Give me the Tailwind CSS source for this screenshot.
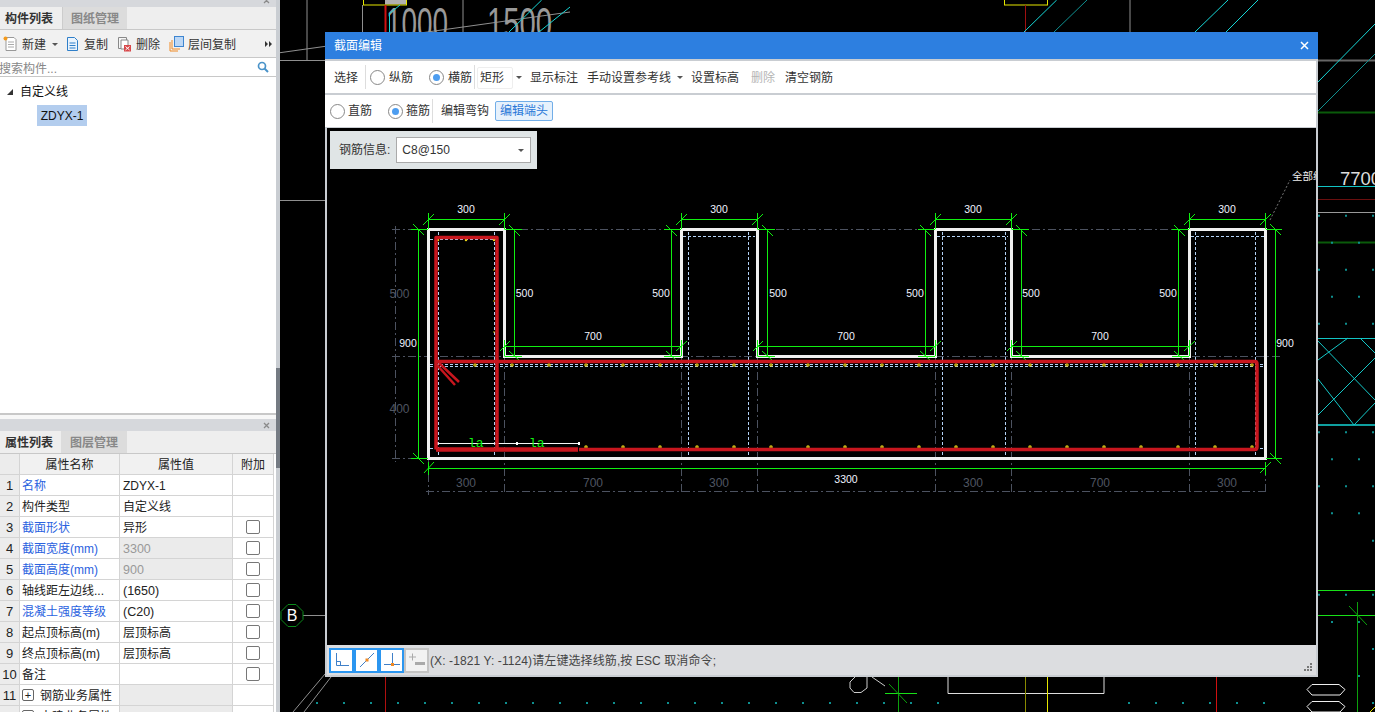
<!DOCTYPE html>
<html lang="zh">
<head>
<meta charset="UTF-8">
<title>截面编辑</title>
<script src="https://cdn.jsdelivr.net/npm/@tailwindcss/browser@4"></script>
</head>
<body class="bg-black overflow-hidden font-['Liberation_Sans','Noto_Sans_CJK_SC',sans-serif] text-[12px] text-[#222]">
<div class="relative w-[1375px] h-[712px] flex overflow-hidden">

  <!-- left side panels -->
  <div class="w-[280px] h-full flex flex-col shrink-0 bg-[#f0f0f0] border-r-[4px] border-[#c9cdd2] relative z-10">
    <div class="h-[7px] bg-[#d6d8dc] flex justify-end pr-[6px] overflow-hidden">
      <svg width="7" height="7" viewBox="0 0 7 7" class="-mt-[3px]"><path d="M1 1l5 5M6 1l-5 5" stroke="#8a8a8a" stroke-width="1.300"/></svg>
    </div>
    <div class="h-[23px] flex bg-[#eeeeee] border-b border-[#c8c8c8]">
      <div class="w-[62px] flex items-center pl-[5px] pt-[2px] font-bold text-[#333]">构件列表</div>
      <div class="w-[65px] flex items-center pl-[8px] pt-[2px] bg-[#dcdcdc] text-[#888] font-bold border-l border-[#ccc]">图纸管理</div>
    </div>
    <div class="h-[28px] flex items-center bg-[#f1f1f1] border-b border-[#c8c8c8] text-[#333] pt-[2px]">
      <svg class="ml-[3px] mr-[4px] -mt-[2px]" width="15" height="16" viewBox="0 0 15 16"><path d="M3 1.500h8l2 2v11H3z" fill="#fff" stroke="#999"/><path d="M5 6h6M5 8.500h6M5 11h6" stroke="#aaa"/><circle cx="2.500" cy="2.500" r="2" fill="#f39a1e"/></svg>
      <span>新建</span>
      <span class="ml-[6px] w-0 h-0 border-x-[3px] border-x-transparent border-t-[3px] border-t-[#555]"></span>
      <svg class="ml-[8px] mr-[5px] -mt-[2px]" width="13" height="16" viewBox="0 0 13 16"><path d="M1.500 1.500h7l3 3v10h-10z" fill="#eaf3fc" stroke="#2f7fc9"/><path d="M3.500 7h6M3.500 9.500h6M3.500 12h6" stroke="#2f7fc9"/></svg>
      <span>复制</span>
      <svg class="ml-[9px] mr-[4px] -mt-[2px]" width="15" height="16" viewBox="0 0 15 16"><path d="M1.500 1.500h8v11h-8z" fill="#f5f5f5" stroke="#888"/><path d="M4 4h7v9H4z" fill="#fff" stroke="#888"/><rect x="7" y="9" width="7" height="6.500" fill="#d8484a"/><path d="M8.500 10.500l4 3.500m0-3.500l-4 3.500" stroke="#fff"/></svg>
      <span>删除</span>
      <svg class="ml-[9px] mr-[4px] -mt-[2px]" width="15" height="16" viewBox="0 0 15 16"><path d="M1 6v9h8M3 4v9h8" fill="none" stroke="#f08a24"/><rect x="5.500" y="0.500" width="9" height="10" fill="#bcd7f5" stroke="#3d85d0"/></svg>
      <span>层间复制</span>
      <svg class="ml-auto mr-[4px] -mt-[2px]" width="7" height="6" viewBox="0 0 7 6" fill="#333"><path d="M0 0l3 3l-3 3zM4 0l3 3l-3 3z"/></svg>
    </div>
    <div class="h-[19px] flex items-center bg-white border-b border-[#c8c8c8] text-[#888] pt-[3px]">
      <span class="-ml-[1px]">搜索构件...</span>
      <svg class="ml-auto mr-[7px] -mt-[3px]" width="12" height="12" viewBox="0 0 12 12"><circle cx="5" cy="5" r="3.500" fill="none" stroke="#4a93c9" stroke-width="1.700"/><path d="M7.500 7.500l3.500 3.500" stroke="#4a93c9" stroke-width="2"/></svg>
    </div>
    <div class="h-[338px] bg-white relative pt-[4px] border-b-2 border-[#c8c8c8]">
      <div class="h-[21px] flex items-center pl-[7px] text-[#111]">
        <svg width="6" height="6" viewBox="0 0 6 6" class="mr-[7px]"><path d="M0 6L6 0v6z" fill="#333"/></svg>
        <span>自定义线</span>
      </div>
      <div class="ml-[37px] mt-[3px] w-[50px] h-[21px] bg-[#b3cdee] flex items-center justify-center text-[#111]">ZDYX-1</div>
    </div>
    <div class="h-[4px] bg-[#f7f7f7]"></div>
    <div class="h-[12px] bg-[#d6d8dc] flex items-center justify-end pr-[6px]">
      <svg width="7" height="7" viewBox="0 0 7 7"><path d="M1 1l5 5M6 1l-5 5" stroke="#8a8a8a" stroke-width="1.300"/></svg>
    </div>
    <div class="h-[22px] flex bg-[#eeeeee]">
      <div class="w-[61px] flex items-center pl-[5px] pt-[2px] font-bold text-[#333]">属性列表</div>
      <div class="w-[66px] flex items-center pl-[9px] pt-[2px] bg-[#dcdcdc] text-[#888] font-bold">图层管理</div>
    </div>
    <div class="flex-1 bg-white overflow-hidden border-t border-[#c8c8c8]">
      <div class="grid grid-cols-[20px_100px_113px_41px] auto-rows-[21px] w-[274px] text-[#222] [&>div]:border-b [&>div]:border-r [&>div]:border-[#d4d4d4] [&>div]:flex [&>div]:items-center [&>div]:pt-[2px] [&>div]:min-w-0 [&>div]:whitespace-nowrap">
        <div class="bg-[#ececec]"></div><div class="bg-[#f1f1f1] justify-center">属性名称</div><div class="bg-[#f1f1f1] justify-center">属性值</div><div class="bg-[#f1f1f1] justify-center">附加</div>

        <div class="bg-[#ececec] justify-center text-[13px]">1</div><div class="pl-[2px] text-[#2a62e0]">名称</div><div class="pl-[3px]">ZDYX-1</div><div></div>
        <div class="bg-[#ececec] justify-center text-[13px]">2</div><div class="pl-[2px]">构件类型</div><div class="pl-[3px]">自定义线</div><div></div>
        <div class="bg-[#ececec] justify-center text-[13px]">3</div><div class="pl-[2px] text-[#2a62e0]">截面形状</div><div class="pl-[3px]">异形</div><div class="justify-center"><span class="w-[14px] h-[14px] mb-[2px] border border-[#777] rounded-[2px] bg-white"></span></div>
        <div class="bg-[#ececec] justify-center text-[13px]">4</div><div class="pl-[2px] text-[#2a62e0]">截面宽度(mm)</div><div class="pl-[3px] bg-[#ebebeb] text-[#999] text-[12.5px]">3300</div><div class="justify-center"><span class="w-[14px] h-[14px] mb-[2px] border border-[#777] rounded-[2px] bg-white"></span></div>
        <div class="bg-[#ececec] justify-center text-[13px]">5</div><div class="pl-[2px] text-[#2a62e0]">截面高度(mm)</div><div class="pl-[3px] bg-[#ebebeb] text-[#999] text-[12.5px]">900</div><div class="justify-center"><span class="w-[14px] h-[14px] mb-[2px] border border-[#777] rounded-[2px] bg-white"></span></div>
        <div class="bg-[#ececec] justify-center text-[13px]">6</div><div class="pl-[2px]">轴线距左边线...</div><div class="pl-[3px] text-[12.5px]">(1650)</div><div class="justify-center"><span class="w-[14px] h-[14px] mb-[2px] border border-[#777] rounded-[2px] bg-white"></span></div>
        <div class="bg-[#ececec] justify-center text-[13px]">7</div><div class="pl-[2px] text-[#2a62e0]">混凝土强度等级</div><div class="pl-[3px] text-[12.5px]">(C20)</div><div class="justify-center"><span class="w-[14px] h-[14px] mb-[2px] border border-[#777] rounded-[2px] bg-white"></span></div>
        <div class="bg-[#ececec] justify-center text-[13px]">8</div><div class="pl-[2px]">起点顶标高(m)</div><div class="pl-[3px]">层顶标高</div><div class="justify-center"><span class="w-[14px] h-[14px] mb-[2px] border border-[#777] rounded-[2px] bg-white"></span></div>
        <div class="bg-[#ececec] justify-center text-[13px]">9</div><div class="pl-[2px]">终点顶标高(m)</div><div class="pl-[3px]">层顶标高</div><div class="justify-center"><span class="w-[14px] h-[14px] mb-[2px] border border-[#777] rounded-[2px] bg-white"></span></div>
        <div class="bg-[#ececec] justify-center text-[13px]">10</div><div class="pl-[2px]">备注</div><div></div><div class="justify-center"><span class="w-[14px] h-[14px] mb-[2px] border border-[#777] rounded-[2px] bg-white"></span></div>
        <div class="bg-[#ececec] justify-center text-[13px]">11</div><div class="pl-[2px]"><span class="w-[12px] h-[12px] mb-[2px] border border-[#666] rounded-[2px] mr-[6px] flex items-center justify-center text-[11px] leading-none">+</span>钢筋业务属性</div><div class="bg-[#ebebeb]"></div><div></div>
        <div class="bg-[#ececec] justify-center text-[13px]">12</div><div class="pl-[2px]"><span class="w-[12px] h-[12px] mb-[2px] border border-[#666] rounded-[2px] mr-[6px] flex items-center justify-center text-[11px] leading-none">+</span>土建业务属性</div><div class="bg-[#ebebeb]"></div><div></div>
      </div>
    </div>
    <span class="absolute left-[276px] top-[368px] w-[4px] h-[100px] bg-[#757b83]"></span>
  </div>

  <!-- CAD background drawing, free canvas -->
  <svg class="absolute left-0 top-0" width="1375" height="712" viewBox="0 0 1375 712" fill="none">
    <g stroke="#8f8f8f">
      <path d="M307 0v60.500M280 60.500h46M280 52.700L570 12M463 0v32M362.500 5v27M280 200.500h46M303 615.500h23"/>
      <path d="M325 674l-32 38M331 677l-27 35"/>
      <path d="M1130 0v32"/>
      <path d="M1318 60.500h57" stroke="#666" stroke-width="2"/>
    </g>
    <text x="386" y="39" font-size="44" fill="#999" font-family="Liberation Sans" textLength="62" lengthAdjust="spacingAndGlyphs">1000</text>
    <text x="487" y="39" font-size="44" fill="#999" font-family="Liberation Sans" textLength="65" lengthAdjust="spacingAndGlyphs">1500</text>
    <rect x="385" y="-4" width="21" height="8.500" fill="#b0b0b0"/>
    <rect x="363.500" y="-4" width="43" height="9" stroke="#e6e600"/>
    <rect x="1004.500" y="-4" width="43" height="9" stroke="#e6e600"/>
    <path d="M385.500 5v27" stroke="#d01010" stroke-width="2"/>
    <path d="M1025.500 5v27" stroke="#a01010"/>
    <g stroke="#16d6d6">
      <path d="M400 5L389 14M389.500 14v18M541.700 0L509 32M570 7L539 32M1056.700 0L1024 32M1228 0l-33 32M1258 0l-32 32M1375 24L1318 82"/>
      <path d="M1087 0l-33 32M1375 54L1318 111" stroke="#0f8f8f"/>
    </g>
    <path d="M288 604.500h8l7 7v8l-7 7h-8l-7-7v-8z" stroke="#0a8a1a"/>
    <text x="292" y="621" text-anchor="middle" font-size="16" fill="#fff" font-family="Liberation Sans">B</text>
    <!-- right strip -->
    <text x="1340" y="185" font-size="18.500" fill="#ddd" font-family="Liberation Sans">7700</text>
    <path d="M1318 112.500h57" stroke="#0a5a0a" stroke-width="2"/>
    <path d="M1318 186.500h57" stroke="#12c4c4"/>
    <path d="M1318 199.500h57" stroke="#6a0f0f"/>
    <path d="M1318 212.500h57" stroke="#999"/>
    <path d="M1318 242.500h57" stroke="#0a5a0a" stroke-width="2"/>
    <path d="M1318 338.500h57" stroke="#12c4c4"/>
    <path d="M1318 425h57" stroke="#0f9f9f" stroke-width="2"/>
    <path d="M1318 360L1348 338M1318 341L1375 400M1360 338L1375 353M1318 415L1375 358M1318 379L1354 425L1375 403" stroke="#14c8c8"/>
    <path d="M1318 590.500h57M1318 615.500h57" stroke="#18e018"/>
    <path d="M1357.500 602v110" stroke="#0ca00c"/>
    <path d="M1349 606l18 19" stroke="#0ca00c"/>
    <path d="M1216.500 677v35" stroke="#d01010"/>
    <path d="M385.500 677v35" stroke="#b01010"/>
    <path d="M1312 684.500h27l6 5l-5 5.500h-28l-5-5.500zM1312 701.500h27l6 5l-5 5.500h-28l-5-5.500z" stroke="#eee"/>
    <path d="M1370 712l5-5" stroke="#e6e600"/>
    <path d="M855 677L850 682V688L854 692.500H861L867 688V677M872 677L885 686" stroke="#ccc"/>
    <path d="M948 677V693.500H1104V677" stroke="#ddd"/>
    <path d="M1025.500 677v35" stroke="#8a8a00"/>
    <path d="M1047.500 677v35" stroke="#e6e600"/>
    <path d="M898.500 677v35" stroke="#0ca00c"/>
    <path d="M885 693.500h32" stroke="#18e018"/>
    <path d="M889 684l18 19" stroke="#0ca00c"/>
    <g stroke="#0e8f8f" stroke-width="2" stroke-dasharray="2 25">
      <path d="M316 703H942M1128 703H1267"/>
      <path d="M1318 215.700h57M1318 269.700h57M1318 323.700h57M1318 432.300h57M1318 486.300h57M1318 594.700h57"/>
      <path d="M1331 242.700h30M1331 296.700h30M1331 459.300h30M1331 513.300h30M1331 622h30"/>
      <path d="M1372 540.700h3M1372 649h3M1372 703h3M1358 676h3"/>
    </g>
  </svg>

  <!-- section editor dialog -->
  <div class="absolute left-[325px] top-[32px] w-[993px] h-[645px] flex flex-col bg-[#c9cdd2] z-20">
    <div class="h-[27px] shrink-0 bg-[#2d7fe0] flex items-center justify-between pl-[9px] pr-[9px] text-white">
      <span>截面编辑</span>
      <svg width="9" height="9" viewBox="0 0 9 9"><path d="M1 1l7 7M8 1l-7 7" stroke="#fff" stroke-width="1.500"/></svg>
    </div>
    <div class="h-[32px] shrink-0 mt-[2px] bg-white flex items-center pl-[3px] pt-[2px] mr-[2px] text-[#333] whitespace-nowrap">
      <span class="px-[6px] h-[22px] flex items-center">选择</span>
      <span class="w-px h-[24px] -mt-[2px] bg-[#ddd] ml-[1px] mr-[4px]"></span>
      <span class="w-[15px] h-[15px] -mt-[2px] rounded-full border border-[#888] mr-[4px]"></span>纵筋
      <span class="w-[15px] h-[15px] -mt-[2px] rounded-full border border-[#888] ml-[16px] mr-[4px] flex items-center justify-center"><span class="w-[7px] h-[7px] rounded-full bg-[#4d9df0]"></span></span>横筋
      <span class="w-px h-[24px] -mt-[2px] bg-[#ddd] mx-[2px]"></span>
      <span class="w-[36px] h-[22px] border border-[#eee] rounded-[2px] flex items-center pl-[2px]">矩形</span>
      <span class="ml-[3px] -mt-[2px] w-0 h-0 border-x-[3px] border-x-transparent border-t-[3px] border-t-[#555]"></span>
      <span class="ml-[3px] px-[5px] h-[22px] flex items-center">显示标注</span>
      <span class="ml-[1px] px-[3px] h-[22px] flex items-center">手动设置参考线</span>
      <span class="ml-[3px] -mt-[2px] w-0 h-0 border-x-[3px] border-x-transparent border-t-[3px] border-t-[#555]"></span>
      <span class="ml-[3px] px-[5px] h-[22px] flex items-center">设置标高</span>
      <span class="ml-[2px] px-[5px] h-[22px] flex items-center text-[#b5b5b5]">删除</span>
      <span class="px-[5px] h-[22px] flex items-center">清空钢筋</span>
    </div>
    <div class="h-[32px] shrink-0 mt-[2px] bg-white flex items-center pl-[5px] mr-[2px] text-[#333] whitespace-nowrap">
      <span class="w-[15px] h-[15px] rounded-full border border-[#888] mr-[3px]"></span>直筋
      <span class="w-[15px] h-[15px] rounded-full border border-[#888] ml-[16px] mr-[3px] flex items-center justify-center"><span class="w-[7px] h-[7px] rounded-full bg-[#4d9df0]"></span></span>箍筋
      <span class="w-px h-[24px] bg-[#ddd] mx-[2px]"></span>
      <span class="ml-[1px] px-[5px] h-[22px] flex items-center">编辑弯钩</span>
      <span class="ml-[1px] px-[4px] h-[20px] flex items-center text-[#2a78d8] bg-[#e6f1fc] border border-[#72aee8] rounded-[2px]">编辑端头</span>
    </div>
    <div class="relative flex-1 mt-[1px] ml-[2px] mr-[2px] bg-black overflow-hidden">
      <svg class="absolute left-0 top-0" width="989" height="517" viewBox="327 128 989 517" fill="none" font-family="Liberation Sans" font-size="10.500">
        <!-- grey axis lines -->
        <g stroke="#4c5260" stroke-dasharray="8 3 2 3">
          <path d="M392 229.500H1280M392 356.500H1280M392 458.500H1280M395.500 226V462"/>
          <path d="M504.500 356V495M681.500 356V495M757.500 356V495M935.500 356V495M1011.500 356V495M1189.500 356V495M1265.500 356V495M428.500 458V495"/>
          <path d="M426 491.500H1268"/>
        </g>
        <!-- blue dashed inner lines -->
        <g stroke="#b4d2f5" stroke-dasharray="3 2">
          <path d="M430 239.500H500M683 236.500H755M937 236.500H1008M1191 236.500H1266"/>
          <path d="M430 364.500H1266M430 366.500H1266M430 448.500H1266"/>
          <path d="M438.500 232V456M494.500 232V456M688.500 232V456M748.500 232V456M942.500 232V456M1005.500 232V456M1195.500 232V456M1255.500 232V456"/>
        </g>
        <!-- outline -->
        <path d="M428.500 229.500H504.500V356.500H681.500V229.500H757.500V356.500H935.500V229.500H1011.500V356.500H1189.500V229.500H1265.500V458.500H428.500Z" stroke="#f0f0f0" stroke-width="3"/>
        <!-- green dimensions -->
        <g stroke="#10f010">
          <path d="M428.500 213V229M504.500 213V229M428.500 219.500H504.500M423 225L434 214M499 225L510 214"/>
          <path d="M681.500 213V229M757.500 213V229M681.500 219.500H757.500M676 225L687 214M752 225L763 214"/>
          <path d="M935.500 213V229M1011.500 213V229M935.500 219.500H1011.500M930 225L941 214M1006 225L1017 214"/>
          <path d="M1189.500 213V229M1265.500 213V229M1189.500 219.500H1265.500M1184 225L1195 214M1260 225L1271 214"/>
          <path d="M418.500 229.500V458M411 229.500H428M413 224L424 235M411 458.500H428M413 453L424 464"/>
          <path d="M1275.500 229.500V458M1266 229.500H1282M1270 224L1281 235M1266 458.500H1282M1270 453L1281 464"/>
          <path d="M428.500 462V475M1265.500 462V475M428.500 468.500H1265.500M424 473L434 462M1260 473L1271 462"/>
          <path d="M514.500 229.500V356M504.500 229.500H522M509 225L520 236M504.500 356.500H522M509 351L520 361"/>
          <path d="M671.500 229.500V356M664 229.500H681M666 225L677 236M664 356.500H681M666 351L677 361"/>
          <path d="M767.500 229.500V356M757.500 229.500H775M762 225L773 236M757.500 356.500H775M762 351L773 361"/>
          <path d="M925.500 229.500V356M918 229.500H935M920 225L931 236M918 356.500H935M920 351L931 361"/>
          <path d="M1021.500 229.500V356M1011.500 229.500H1029M1016 225L1027 236M1011.500 356.500H1029M1016 351L1027 361"/>
          <path d="M1178.500 229.500V356M1172 229.500H1189M1174 225L1185 236M1172 356.500H1189M1174 351L1185 361"/>
          <path d="M504.500 346.500H681.500M757.500 346.500H935.500M1011.500 346.500H1189.500"/>
          <path d="M504.500 340V356M681.500 340V356M757.500 340V356M935.500 340V356M1011.500 340V356M1189.500 340V356"/>
          <path d="M500 351L510 341M676 351L687 341M753 351L763 341M930 351L941 341M1007 351L1017 341M1184 351L1195 341"/>
        </g>
        <!-- yellow rebar points -->
        <g stroke="#e8d21a" stroke-width="3.500" stroke-linecap="round">
          <path d="M475 365H1256" stroke-dasharray="0 37"/>
          <path d="M586 447H1256" stroke-dasharray="0 37"/>
          <path d="M438 240H496" stroke-dasharray="0 28" stroke-width="2.500"/>
          <path d="M438 270V340M494 270V340" stroke-dasharray="0 31" stroke-width="1.500"/>
        </g>
        <g stroke="#000" stroke-width="1.200" stroke-linecap="round">
          <path d="M475 365H1256" stroke-dasharray="0 37"/>
          <path d="M586 447H1256" stroke-dasharray="0 37"/>
        </g>
        <!-- white la bar -->
        <path d="M436 443.500H579" stroke="#f5f5f5" stroke-width="1.200"/>
        <path d="M436 442h2v3h-2zM516 442h2v3h-2zM578 442h2v3h-2z" fill="#fff"/>
        <!-- red rebar -->
        <g stroke="#c8161e" stroke-linejoin="round">
          <path d="M436 449.500V237.500H497V449.500" stroke-width="3.500"/>
          <path d="M436 361.500H1255Q1257 361.500 1257 364V447Q1257 449.500 1255 449.500H579" stroke-width="3.500"/>
          <path d="M436 449.500H578" stroke-width="4.500"/>
          <path d="M437 365L455 385M439 363L459 382" stroke-width="2.500"/>
        </g>
        <!-- labels -->
        <g fill="#f0f4ff" text-anchor="middle">
          <text x="466" y="213">300</text><text x="719" y="213">300</text><text x="973" y="213">300</text><text x="1227" y="213">300</text>
          <text x="524.500" y="297">500</text><text x="661" y="297">500</text><text x="778" y="297">500</text><text x="915" y="297">500</text><text x="1031" y="297">500</text><text x="1168" y="297">500</text>
          <text x="593" y="340">700</text><text x="846" y="340">700</text><text x="1100" y="340">700</text>
          <text x="408" y="347">900</text><text x="1285" y="347">900</text>
          <text x="846" y="483">3300</text>
        </g>
        <g fill="#4f5560" font-size="12" text-anchor="middle">
          <text x="466" y="487">300</text><text x="593" y="487">700</text><text x="719" y="487">300</text><text x="973" y="487">300</text><text x="1100" y="487">700</text><text x="1227" y="487">300</text>
          <text x="399.500" y="298">500</text><text x="399.500" y="412.500">400</text>
        </g>
        <text x="468" y="447" fill="#10f010" font-family="Liberation Mono" font-size="13">la</text>
        <text x="529" y="447" fill="#10f010" font-family="Liberation Mono" font-size="13">la</text>
        <path d="M1270 220L1290 180" stroke="#777" stroke-dasharray="2 2"/>
        <text x="1292" y="180" fill="#eee" font-family="Noto Sans CJK SC" font-size="10.500">全部纵</text>
      </svg>
      <div class="absolute left-[3px] top-[3px] w-[207px] h-[38px] bg-[#e0e5e6] flex items-center pl-[9px] text-[#333]">
        <span>钢筋信息:</span>
        <div class="ml-[6px] w-[135px] h-[26px] bg-white border border-[#aaa] flex items-center justify-between pl-[5px] pr-[6px]">
          <span>C8@150</span>
          <span class="w-0 h-0 border-x-[3px] border-x-transparent border-t-[3px] border-t-[#555]"></span>
        </div>
      </div>
    </div>
    <div class="h-[30px] shrink-0 ml-[2px] mr-[2px] mb-[2px] bg-[#dcdde0] flex items-center pl-[2px] text-[#444] relative">
      <div class="flex">
        <span class="w-[25px] h-[25px] bg-white border-2 border-[#2b96f0] flex items-center justify-center">
          <svg width="16" height="16" viewBox="0 0 16 16" fill="none"><path d="M2.500 1v12.500H15M2.500 9.500h4v4" stroke="#4080c8"/></svg>
        </span>
        <span class="w-[25px] h-[25px] bg-white border-2 border-[#2b96f0] flex items-center justify-center">
          <svg width="18" height="18" viewBox="0 0 18 18" fill="none"><path d="M2 16L16 2" stroke="#4080c8"/><rect x="7.500" y="7.500" width="3" height="3" fill="#f08a24"/></svg>
        </span>
        <span class="w-[25px] h-[25px] bg-white border-2 border-[#2b96f0] flex items-center justify-center">
          <svg width="18" height="18" viewBox="0 0 18 18" fill="none"><path d="M1 13.500h16M9.500 2v11.500" stroke="#4080c8"/><rect x="8" y="12" width="3" height="3" fill="#f08a24"/></svg>
        </span>
        <span class="w-[25px] h-[25px] bg-[#f2f2f2] border-2 border-[#c4c4c4] flex items-center justify-center">
          <svg width="18" height="18" viewBox="0 0 18 18" fill="none"><path d="M1 6h7M4.500 2.500v7" stroke="#aaa"/><rect x="7" y="11" width="10" height="3" fill="#aaa"/></svg>
        </span>
      </div>
      <span class="ml-[1px] pt-[2px] tracking-[0.1px] whitespace-nowrap">(X: -1821 Y: -1124)请左键选择线筋,按 ESC 取消命令;</span>
      <svg class="absolute right-[4px] bottom-[4px]" width="8" height="8" viewBox="0 0 8 8" fill="#777"><path d="M6 0h2v2H6zM3 3h2v2H3zM6 3h2v2H6zM0 6h2v2H0zM3 6h2v2H3zM6 6h2v2H6z"/></svg>
    </div>
  </div>
</div>
</body>
</html>
